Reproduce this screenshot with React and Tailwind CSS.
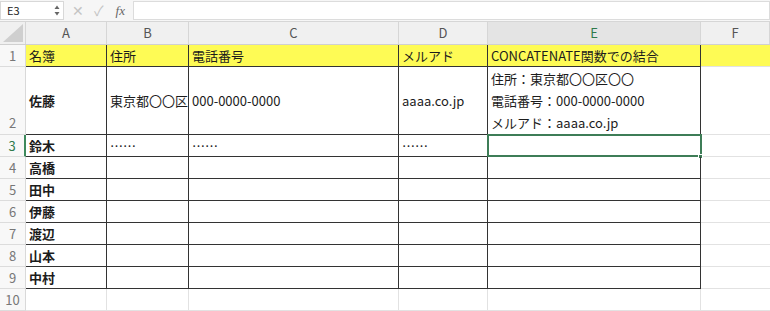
import React from "react";

const font = { fontFamily: '"Noto Sans CJK JP", "Noto Sans", sans-serif' };

const widths = ["w-[26px]", "w-[81px]", "w-[82px]", "w-[210px]", "w-[89px]", "w-[213px]", "flex-1"];

const rows = [
  { n: 2, h: "h-[68px]", cells: ["佐藤", "東京都〇〇区", "000-0000-0000", "aaaa.co.jp", null] },
  { n: 3, h: "h-[22px]", cells: ["鈴木", "……", "……", "……", ""] },
  { n: 4, h: "h-[22px]", cells: ["高橋", "", "", "", ""] },
  { n: 5, h: "h-[22px]", cells: ["田中", "", "", "", ""] },
  { n: 6, h: "h-[22px]", cells: ["伊藤", "", "", "", ""] },
  { n: 7, h: "h-[22px]", cells: ["渡辺", "", "", "", ""] },
  { n: 8, h: "h-[22px]", cells: ["山本", "", "", "", ""] },
  { n: 9, h: "h-[22px]", cells: ["中村", "", "", "", ""] },
];

function RowHead({ n, h, active, bottom }) {
  return (
    <div
      className={`${widths[0]} ${h} shrink-0 flex justify-center text-[13px] bg-[#f8f8f8] border-b border-[#dcdcdc] ${
        bottom ? "items-end pb-[2px]" : "items-center"
      } ${active ? "text-[#2f7a4c] border-r-2 border-r-[#3e8a5c]" : "text-[#777] border-r border-r-[#d9d9d9]"}`}
    >
      {n}
    </div>
  );
}

export default function App() {
  return (
    <div className="w-[770px] h-[311px] overflow-hidden bg-white text-[#1c1c1c]" style={font}>
      {/* formula bar */}
      <div className="h-[22px] flex items-center bg-[#f6f6f6] border-b border-[#d6d6d6]">
        <div className="w-[64px] h-[19px] bg-white border border-[#d8d8d8] flex items-center justify-between pl-[6px] pr-[3px] text-[11px]">
          <span>E3</span>
          <svg width="6" height="11" viewBox="0 0 6 11">
            <path d="M3 0.5 L5.5 4 L0.5 4 Z" fill="#666" />
            <path d="M3 10.5 L5.5 7 L0.5 7 Z" fill="#666" />
          </svg>
        </div>
        <span className="ml-[8px] text-[#c4c4c4] text-[14px]">✕</span>
        <span className="ml-[10px] text-[#c4c4c4] text-[14px]">✓</span>
        <span className="ml-[12px] text-[#666] text-[13px] italic" style={{ fontFamily: '"Liberation Serif", serif' }}>
          fx
        </span>
        <div className="ml-[8px] flex-1 h-[19px] bg-white border border-[#dcdcdc]" />
      </div>

      {/* column headers */}
      <div className="flex h-[23px] bg-[#f0f0f0] border-b border-[#d0d0d0] text-[13px] text-[#555]">
        <div className={`${widths[0]} shrink-0 relative border-r border-[#d6d6d6]`}>
          <div className="absolute right-[2px] bottom-[2px] w-0 h-0 border-l-[20px] border-l-transparent border-b-[18px] border-b-[#cfcfcf]" />
        </div>
        {["A", "B", "C", "D", "E", "F"].map((c, i) => (
          <div
            key={c}
            className={`${widths[i + 1]} shrink-0 flex items-center justify-center border-r border-[#d6d6d6] ${
              c === "E" ? "bg-[#e4e4e4] text-[#2f7a4c]" : ""
            }`}
          >
            {c}
          </div>
        ))}
      </div>

      {/* row 1 */}
      <div className="flex h-[22px] text-[13px]">
        <RowHead n={1} h="h-[22px]" />
        {["名簿", "住所", "電話番号", "メルアド", "CONCATENATE関数での結合"].map((t, i) => (
          <div
            key={i}
            className={`${widths[i + 1]} shrink-0 bg-[#fefb55] flex items-center pl-[3px] whitespace-nowrap border-r border-b border-[#333]`}
          >
            {t}
          </div>
        ))}
        <div className="flex-1 bg-[#fefb55] border-b border-[#e2e2e2]" />
      </div>

      {/* data rows */}
      {rows.map((r) => (
        <div key={r.n} className="flex text-[13px]">
          <RowHead n={r.n} h={r.h} active={r.n === 3} bottom={r.n === 2} />
          {r.cells.map((t, i) => {
            const sel = r.n === 3 && i === 4;
            return (
              <div
                key={i}
                className={`${widths[i + 1]} ${r.h} shrink-0 relative flex items-center pl-[3px] whitespace-nowrap border-r border-b border-[#333] ${
                  i === 0 ? "font-bold" : ""
                }`}
              >
                {t === null ? (
                  <div className="flex flex-col leading-[22px] pt-[1px]">
                    <span>住所：東京都〇〇区〇〇</span>
                    <span>電話番号：000-0000-0000</span>
                    <span>メルアド：aaaa.co.jp</span>
                  </div>
                ) : (
                  t
                )}
                {sel && (
                  <>
                    <div className="absolute -left-[1px] -top-[1px] w-[215px] h-[23px] border-2 border-[#3e7d57]" />
                    <div className="absolute -right-[3px] -bottom-[3px] w-[5px] h-[5px] bg-[#3e7d57] border border-white" />
                  </>
                )}
              </div>
            );
          })}
          <div className={`flex-1 ${r.h} border-b border-[#e2e2e2]`} />
        </div>
      ))}

      {/* row 10 */}
      <div className="flex text-[13px]">
        <RowHead n={10} h="h-[22px]" />
        {[1, 2, 3, 4, 5].map((i) => (
          <div key={i} className={`${widths[i]} h-[22px] shrink-0 border-r border-b border-[#e2e2e2]`} />
        ))}
        <div className="flex-1 h-[22px] border-b border-[#e2e2e2]" />
      </div>
    </div>
  );
}
